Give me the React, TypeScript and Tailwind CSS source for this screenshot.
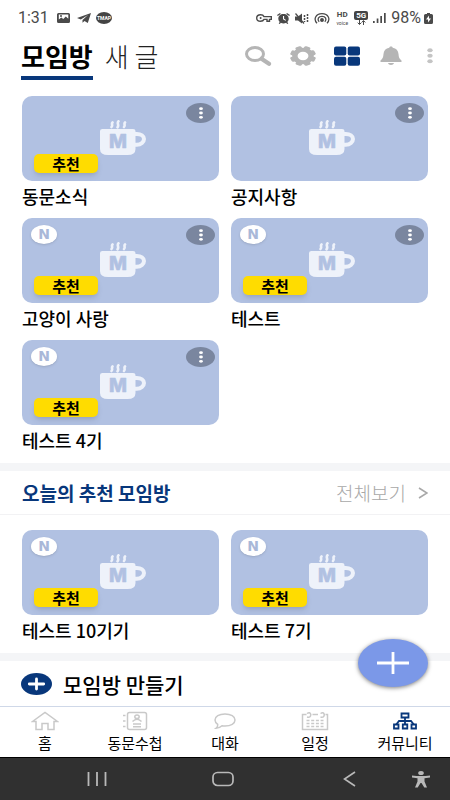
import type { ReactNode } from "react";
import clsx from "clsx";

type Room = { name: string; isNew?: boolean; pick?: boolean; menu?: boolean };

const myRooms: Room[] = [
  { name: "동문소식", pick: true, menu: true },
  { name: "공지사항", menu: true },
  { name: "고양이 사랑", isNew: true, pick: true, menu: true },
  { name: "테스트", isNew: true, pick: true, menu: true },
  { name: "테스트 4기", isNew: true, pick: true, menu: true },
];

const todayRooms: Room[] = [
  { name: "테스트 10기기", isNew: true, pick: true },
  { name: "테스트 7기", isNew: true, pick: true },
];

const StatusBar = () => (
  <div className="flex h-9 items-center justify-between pr-[17px] pl-[18px] font-['Roboto',sans-serif] text-[#4a4a4a] text-base leading-5">
    <div className="flex items-center gap-[7px]">
      <span className="w-8">1:31</span>
      <svg width="13" height="10" viewBox="0 0 13 10" fill="currentColor">
        <path
          fillRule="evenodd"
          d="M1.500 0h10A1.500 1.500 0 0 1 13 1.500v7A1.500 1.500 0 0 1 11.500 10h-10A1.500 1.500 0 0 1 0 8.500v-7A1.500 1.500 0 0 1 1.500 0zM1.800 1.500v5l2.500-2 2 1.500 2.500-2.500 2.500 2.200V1.500z"
        />
        <circle cx="4" cy="3" r="1" />
      </svg>
      <svg width="14" height="10" viewBox="0 0 14 10" fill="currentColor">
        <path d="M14 0 0 5l3.800 1.500L11 2 5.500 7v2.800l2-1.900L10.800 10z" />
      </svg>
      <span className="-ml-0.5 flex h-3 w-4 items-center justify-center rounded-[50%] bg-[#444] font-bold text-[5px] text-white leading-3">
        TMAP
      </span>
    </div>
    <div className="flex items-center gap-[5px]">
      <svg width="16" height="8" viewBox="0 0 16 8" fill="none" stroke="currentColor" strokeWidth="1.400">
        <path d="M8 2.600C7.500 1.500 6.200.700 4.600.700 2.400.700.700 2.100.700 4s1.700 3.300 3.900 3.300c1.600 0 2.900-.800 3.400-1.900h3v1.800h2.500V5.400h1.800V2.600z" />
        <circle cx="4.600" cy="4" r="1" fill="currentColor" stroke="none" />
      </svg>
      <svg width="13" height="11" viewBox="0 0 13 11" fill="currentColor">
        <path d="M0 2 3 0l.8.900L.800 2.900zM13 2 10 0l-.8.900 3 2z" />
        <path
          fillRule="evenodd"
          d="M6.500 1C9.500 1 11.700 3.100 11.700 5.700c0 1.300-.5 2.400-1.400 3.300l1 1.500-1.200.5-.9-1.200a6 6 0 0 1-5.400 0L2.900 11l-1.200-.5 1-1.500a4.600 4.600 0 0 1-1.400-3.300C1.300 3.100 3.500 1 6.500 1zM6 3v3.200l2.500 1.600.6-.8L7.100 5.700V3z"
        />
      </svg>
      <svg width="14" height="11" viewBox="0 0 14 11" fill="currentColor">
        <path d="M0 3.500h3L7 .5v10l-4-3H0z" />
        <path d="m.5.500 8.500 10" stroke="currentColor" strokeWidth="1.200" />
        <path d="M9.500 2v7M12.500 1v9" stroke="currentColor" strokeWidth="1.500" strokeDasharray="2 1" />
      </svg>
      <svg width="16" height="11" viewBox="0 0 16 11" fill="none" stroke="currentColor" strokeWidth="1.300">
        <path d="M3 10.300C-.8 6.300 1.600.700 8 .700s8.800 5.600 5 9.600" />
        <path d="M5.200 8.800C2.800 6.300 4.400 3.300 8 3.300s5.200 3 2.800 5.500" />
        <circle cx="8" cy="7" r="1.300" fill="currentColor" />
      </svg>
      <span className="flex w-[14px] flex-col items-center">
        <span className="font-bold text-[8px] leading-[10px]">HD</span>
        <span className="text-[5px] leading-[6px]">voice</span>
      </span>
      <span className="flex w-[14px] flex-col items-center">
        <span className="w-full rounded-[2px] bg-[#444] text-center font-bold text-[8px] text-white leading-[9px]">5G</span>
        <svg width="9" height="5" viewBox="0 0 9 5" fill="none" stroke="currentColor">
          <path d="M2.500 0v4.300M.700 2.700l1.800 1.800 1.800-1.800M6.500 5V.700M4.700 2.400 6.500.600l1.800 1.800" />
        </svg>
      </span>
      <svg width="13" height="10" viewBox="0 0 13 10" fill="currentColor">
        <path d="M0 8h1.700v2H0zM3.700 5.500h1.700V10H3.700zM7.300 3H9v7H7.300zM11 0h1.700v10H11z" />
      </svg>
      <span>98%</span>
      <svg className="-ml-0.5" width="9" height="11" viewBox="0 0 9 11" fill="currentColor">
        <path
          fillRule="evenodd"
          d="M3 0h3v1h1.500Q9 1 9 2.500v7Q9 11 7.500 11h-6Q0 11 0 9.500v-7Q0 1 1.500 1H3zM5 2.500 2 6.500h2v3l3-4H5z"
        />
      </svg>
    </div>
  </div>
);

const Header = () => (
  <header className="flex items-start justify-between pr-3 pl-[21px]">
    <nav className="flex gap-3 text-[26px] leading-10">
      <a href="#rooms" className="border-[#08377b] border-b-4 font-bold text-black">
        모임방
      </a>
      <a href="#posts" className="font-light text-[#222]">
        새 글
      </a>
    </nav>
    <div className="flex h-10 items-center gap-[18px] text-[#b5b5b5]">
      <button type="button" aria-label="검색">
        <svg width="27" height="20" viewBox="0 0 27 20" fill="none" stroke="currentColor">
          <ellipse cx="10" cy="8" rx="8.500" ry="6.500" strokeWidth="3" />
          <path d="m16.500 12.800 7.500 5" strokeWidth="4.200" strokeLinecap="round" />
        </svg>
      </button>
      <button type="button" aria-label="설정">
        <svg width="26" height="20" viewBox="0 0 24 24" preserveAspectRatio="none" fill="currentColor">
          <circle cx="12" cy="12" r="10" />
          <rect x="9" width="6" height="24" rx="1.500" transform="rotate(22 12 12)" />
          <rect x="9" width="6" height="24" rx="1.500" transform="rotate(67 12 12)" />
          <rect x="9" width="6" height="24" rx="1.500" transform="rotate(112 12 12)" />
          <rect x="9" width="6" height="24" rx="1.500" transform="rotate(157 12 12)" />
          <circle cx="12" cy="12" r="5" fill="#fff" />
        </svg>
      </button>
      <button type="button" aria-label="바둑판 보기" className="text-[#08377b]">
        <svg width="26" height="20" viewBox="0 0 26 20" fill="currentColor">
          <rect y=".500" width="12.300" height="9" rx="2" />
          <rect x="13.700" y=".500" width="12.300" height="9" rx="2" />
          <rect y="10.700" width="12.300" height="9" rx="2" />
          <rect x="13.700" y="10.700" width="12.300" height="9" rx="2" />
        </svg>
      </button>
      <button type="button" aria-label="알림">
        <svg width="26" height="20" viewBox="0 0 26 20" fill="currentColor">
          <path d="M13 .5c1 0 1.600.500 1.700 1.200C18.200 2.300 20.300 4.500 20.500 8c.2 3.200 1 5 3 6.500V16h-21v-1.500c2-1.500 2.800-3.300 3-6.500C5.700 4.500 7.800 2.300 11.300 1.700 11.400 1 12 .5 13 .5zM10 17h6c-.3 1.300-1.500 2-3 2s-2.700-.7-3-2z" />
        </svg>
      </button>
      <button type="button" aria-label="더보기" className="flex w-4 justify-center text-[#c4c4c4]">
        <svg width="6" height="16" viewBox="0 0 6 16" fill="currentColor">
          <ellipse cx="3" cy="2.300" rx="2.700" ry="2" />
          <ellipse cx="3" cy="7.800" rx="2.700" ry="2" />
          <ellipse cx="3" cy="13.300" rx="2.700" ry="2" />
        </svg>
      </button>
    </div>
  </header>
);

const Mug = () => (
  <svg width="46" height="35" viewBox="0 0 46 35" fill="none">
    <g stroke="#eef2fa" strokeWidth="2.600" strokeLinecap="round">
      <path d="M12.500 2.500c-1.600 1.500.8 2.500-1 4.500M18.500 1.300c-2.200 2 1.200 3.500-1 6M25 2.500c-1.600 1.500.8 2.500-1 4.500" />
    </g>
    <path d="M33.500 14h3.300c4.200 0 7.200 2 7.200 5s-3 5.800-7.200 5.800h-3.300" stroke="#eef2fa" strokeWidth="4" />
    <path d="M2.500 9H33q2.500 0 2.500 2v18q0 6-8 6H8q-8 0-8-6V11q0-2 2.500-2z" fill="#eef2fa" />
    <text
      x="18"
      y="28"
      textAnchor="middle"
      fill="#b1c1e2"
      stroke="#b1c1e2"
      strokeWidth=".5"
      strokeLinejoin="round"
      className="font-['Inter',sans-serif] font-extrabold text-[19px]"
    >
      M
    </text>
  </svg>
);

const RoomCard = ({ name, isNew, pick, menu }: Room) => (
  <li>
    <div className="relative flex h-[85px] items-center justify-center rounded-[10px] bg-[#b1c1e2] pb-0.5 pl-1">
      <Mug />
      {isNew && (
        <span className="absolute top-[7px] left-[9px] flex h-[19px] w-[26px] items-center justify-center rounded-[50%] bg-white font-['DejaVu_Sans',sans-serif] font-bold text-[#a9b8d8] text-[14px] leading-[19px] shadow-sm">
          N
        </span>
      )}
      {pick && (
        <span className="absolute bottom-2 left-3 flex h-[19px] w-16 items-center justify-center rounded-[5px] bg-[#ffdc00] font-bold text-[15px] text-black leading-none shadow-md">
          추천
        </span>
      )}
      {menu && (
        <button
          type="button"
          aria-label={`${name} 메뉴`}
          className="absolute top-[7px] right-1 flex h-5 w-[29px] items-center justify-center rounded-[50%] bg-[#7a869f] text-white"
        >
          <svg width="4" height="12" viewBox="0 0 4 12" fill="currentColor">
            <ellipse cx="2" cy="1.700" rx="1.900" ry="1.400" />
            <ellipse cx="2" cy="6" rx="1.900" ry="1.400" />
            <ellipse cx="2" cy="10.300" rx="1.900" ry="1.400" />
          </svg>
        </button>
      )}
    </div>
    <a href="#room" className="block font-medium text-[18px] text-black leading-[31px]">
      {name}
    </a>
  </li>
);

const RoomGrid = ({ rooms, className }: { rooms: Room[]; className: string }) => (
  <ul className={clsx("grid grid-cols-2 gap-x-3 gap-y-1.5 border-[#f4f5f7] border-b-8 px-[22px] pb-[7px]", className)}>
    {rooms.map((room) => (
      <RoomCard key={room.name} {...room} />
    ))}
  </ul>
);

const tabs: { label: string; icon: ReactNode; active?: boolean }[] = [
  {
    label: "홈",
    icon: <path d="M5 10.500H1.500L14 1.500l12.500 9H23v8h-6v-6h-6v6H5z" />,
  },
  {
    label: "동문수첩",
    icon: (
      <>
        <rect x="6.500" y="1.500" width="19" height="17" rx="2" />
        <path d="M2 4.500h2.500M2 10h2.500M2 15.500h2.500M12 13h8M12 15.700h8M11.500 10.500q4.500-4.500 9 0" />
        <ellipse cx="16" cy="5.800" rx="2.200" ry="1.800" />
      </>
    ),
  },
  {
    label: "대화",
    icon: (
      <path d="M14 3c6 0 10 2.500 10 6s-4 6-10 6c-1 0-2-.1-3-.3-1.600 1.500-3.500 2.600-6 2.600 1.500-1.200 2-2.500 1.700-4C5 12.100 4 10.700 4 9c0-3.500 4-6 10-6z" />
    ),
  },
  {
    label: "일정",
    icon: (
      <>
        <path d="M5.500 3.500h-4v15h25v-15h-2M11.500 3.500H17" />
        <path d="M6 6q3.800 1 3.800-2.500Q9 .5 6 2.500M19.500 6q3.800 1 3.800-2.500-.8-3-3.800-1" />
        <path d="M5.500 9.500h17M5.500 12.500h17M5.500 15.500h17" strokeWidth="1.600" strokeDasharray="3 1.700" />
      </>
    ),
  },
  {
    label: "커뮤니티",
    active: true,
    icon: (
      <>
        <path d="M10.500 2.500h7v4h-7zM3 13.500h4.500v4H3zM11.800 13.500h4.500v4h-4.500zM20.500 13.500H25v4h-4.500z" />
        <path d="M14 6.500v7M5.200 13.500 8 10h12l2.800 3.500" />
      </>
    ),
  },
];

const TabBar = () => (
  <nav className="grid h-[51px] grid-cols-5 border-[#cfd8e8] border-t bg-white pt-1">
    {tabs.map(({ label, icon, active }) => (
      <a key={label} href="#tab" className="flex flex-col items-center text-[15px] text-black leading-[23px]">
        <svg
          width="28"
          height="20"
          viewBox="0 0 28 20"
          fill="none"
          stroke="currentColor"
          strokeWidth={active ? 1.8 : 1.5}
          className={active ? "text-[#08377b]" : "text-[#c9c9c9]"}
        >
          {icon}
        </svg>
        {label}
      </a>
    ))}
  </nav>
);

const SystemBar = () => (
  <div className="flex h-[43px] items-center border-black border-t bg-[#303030] pr-5 pl-[34px] text-[#b9b9b9]">
    <button type="button" aria-label="최근 앱" className="flex flex-1 justify-center">
      <svg width="20" height="16" viewBox="0 0 20 16" fill="none" stroke="currentColor" strokeWidth="1.800">
        <path d="M1.500 1v14M10 1v14M18.500 1v14" />
      </svg>
    </button>
    <button type="button" aria-label="홈 화면" className="flex flex-1 justify-center">
      <svg width="22" height="16" viewBox="0 0 22 16" fill="none" stroke="currentColor" strokeWidth="1.700">
        <rect x="1" y="1.500" width="20" height="13" rx="4.500" />
      </svg>
    </button>
    <button type="button" aria-label="뒤로" className="flex flex-1 justify-center">
      <svg width="13" height="16" viewBox="0 0 13 16" fill="none" stroke="currentColor" strokeWidth="1.600">
        <path d="M12 1 1.500 8 12 15" />
      </svg>
    </button>
    <button type="button" aria-label="접근성">
      <svg width="18" height="17" viewBox="0 0 18 17" fill="currentColor">
        <ellipse cx="9" cy="2" rx="2.800" ry="2" />
        <path d="M0 4.500q9 1.200 18 0v1.900l-5.500.8v3.300L15 16.500h-2.700L9.500 12h-1l-2.800 4.500H3l2.500-6V7.200L0 6.400z" />
      </svg>
    </button>
  </div>
);

export default function App() {
  return (
    <div className="flex min-h-screen flex-col bg-white font-['Noto_Sans_CJK_KR',sans-serif]">
      <StatusBar />
      <Header />
      <main className="relative flex-1">
        <RoomGrid rooms={myRooms} className="pt-4" />
        <section>
          <div className="flex h-11 items-center justify-between border-[#f2f2f4] border-b px-[22px]">
            <h2 className="font-bold text-[#08377b] text-[19px] leading-7">오늘의 추천 모임방</h2>
            <a href="#all" className="flex items-center gap-3 font-light text-[#a8a8a8] text-[19px] leading-7">
              전체보기
              <svg width="10" height="12" viewBox="0 0 10 12" fill="none" stroke="currentColor" strokeWidth="1.600">
                <path d="m1 1 8 5-8 5" />
              </svg>
            </a>
          </div>
          <RoomGrid rooms={todayRooms} className="pt-[15px]" />
        </section>
        <button type="button" className="flex h-[45px] w-full items-center gap-[11px] px-[21px] font-medium text-[21px] text-black leading-7">
          <svg width="31" height="22" viewBox="0 0 31 22" fill="none">
            <ellipse cx="15.500" cy="11" rx="15.500" ry="11" fill="#08377b" />
            <path d="M8.300 11h14.400M15.500 6v10" stroke="#fff" strokeWidth="2.800" strokeLinecap="round" />
          </svg>
          모임방 만들기
        </button>
        <button
          type="button"
          aria-label="새 글 쓰기"
          className="absolute right-[22px] bottom-[19px] flex h-12 w-[70px] items-center justify-center rounded-[50%] bg-[#7b98e8] text-white shadow-[0_1px_4px_rgba(0,0,0,0.5)]"
        >
          <svg width="32" height="24" viewBox="0 0 32 24" fill="none" stroke="currentColor" strokeWidth="2.800">
            <path d="M0 12h32M16 1v22" />
          </svg>
        </button>
      </main>
      <TabBar />
      <SystemBar />
    </div>
  );
}
